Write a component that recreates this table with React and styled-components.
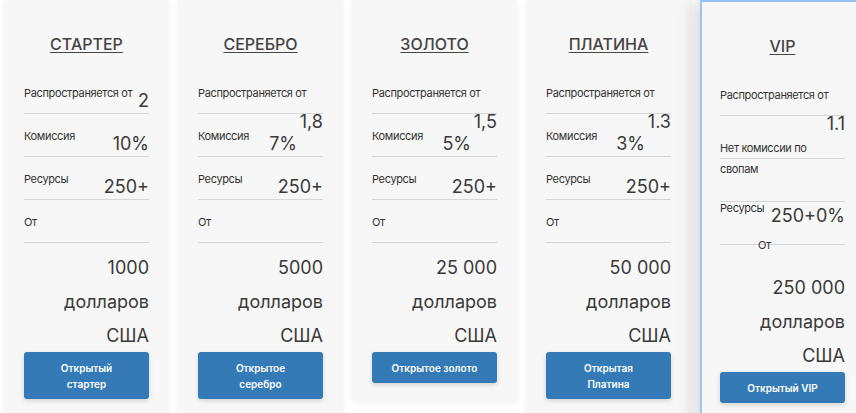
import React from "react";
import styled, { createGlobalStyle, css } from "styled-components";

const GlobalStyle = createGlobalStyle`
  html, body {
    margin: 0;
    padding: 0;
    background: #ffffff;
    overflow: hidden;
  }
  body {
    font-family: Inter, "Noto Sans", sans-serif;
    color: #333;
  }
`;

const plans = [
  {
    title: "СТАРТЕР",
    spread: "2",
    commission: "10%",
    resources: "250+",
    price: "1000",
    button: ["Открытый", "стартер"],
  },
  {
    title: "СЕРЕБРО",
    spread: "1,8",
    wrapSpread: true,
    commission: "7%",
    resources: "250+",
    price: "5000",
    button: ["Открытое", "серебро"],
  },
  {
    title: "ЗОЛОТО",
    spread: "1,5",
    wrapSpread: true,
    commission: "5%",
    resources: "250+",
    price: "25 000",
    button: ["Открытое золото"],
  },
  {
    title: "ПЛАТИНА",
    spread: "1.3",
    wrapSpread: true,
    commission: "3%",
    resources: "250+",
    price: "50 000",
    button: ["Открытая", "Платина"],
  },
];

function PriceLines({ amount, drop }) {
  return (
    <Price $drop={drop}>
      <div>{amount}</div>
      <div>долларов</div>
      <div>США</div>
    </Price>
  );
}

function PlanCard({ plan }) {
  return (
    <Card>
      <Title>{plan.title}</Title>
      <Row>
        <Label>Распространяется от</Label>
        <Value $below={plan.wrapSpread}>{plan.spread}</Value>
      </Row>
      <Row>
        <Label>Комиссия</Label>
        <Value $shift={plan.wrapSpread ? 26 : 0}>{plan.commission}</Value>
      </Row>
      <Row>
        <Label>Ресурсы</Label>
        <Value>{plan.resources}</Value>
      </Row>
      <Row>
        <Label>От</Label>
      </Row>
      <PriceLines amount={plan.price} />
      <OpenButton>
        {plan.button.map((line) => (
          <span key={line}>{line}</span>
        ))}
      </OpenButton>
    </Card>
  );
}

function VipCard() {
  return (
    <Card $featured>
      <Title>VIP</Title>
      <Row>
        <Label>Распространяется от</Label>
        <Value $below>1.1</Value>
      </Row>
      <Row>
        <Label $drop={10} $maxWidth={100} $wrap>
          Нет комиссии по свопам
        </Label>
      </Row>
      <Row $drop={27}>
        <Label>Ресурсы</Label>
        <Value>250+0%</Value>
      </Row>
      <Row $drop={21}>
        <Label $indent={38}>От</Label>
      </Row>
      <PriceLines amount="250 000" drop={18} />
      <OpenButton>
        <span>Открытый VIP</span>
      </OpenButton>
    </Card>
  );
}

export default function App() {
  return (
    <>
      <GlobalStyle />
      <Plans>
        {plans.map((plan) => (
          <PlanCard key={plan.title} plan={plan} />
        ))}
        <VipCard />
      </Plans>
    </>
  );
}

const Plans = styled.div`
  display: flex;
  align-items: flex-start;
  gap: 9px;
  padding-left: 4px;
  width: 856px;
  height: 413px;
  overflow: hidden;
  box-sizing: border-box;
`;

const Card = styled.div`
  flex: 0 0 165px;
  box-sizing: border-box;
  padding: 0 20px 19px;
  background: #f7f7f7;
  border-radius: 0 0 4px 4px;
  box-shadow: 0 1px 6px rgba(0, 0, 0, 0.06);
  display: flex;
  flex-direction: column;
  ${(p) =>
    p.$featured &&
    css`
      padding: 0 18px 19px;
      border: 2px solid #9cc2f3;
      box-shadow: -6px 0 18px rgba(0, 0, 0, 0.16);
    `}
`;

const Title = styled.h3`
  margin: 0;
  padding: 34px 0 17px;
  font-size: 16px;
  line-height: 20px;
  font-weight: 500;
  color: #444;
  text-align: center;
  text-decoration: underline;
  text-underline-offset: 2px;
`;

const Label = styled.span`
  font-size: 11px;
  line-height: 21px;
  letter-spacing: -0.35px;
  color: #333;
  white-space: ${(p) => (p.$wrap ? "normal" : "nowrap")};
  margin-top: ${(p) => p.$drop || 0}px;
  margin-left: ${(p) => p.$indent || 0}px;
  max-width: ${(p) => (p.$maxWidth ? `${p.$maxWidth}px` : "none")};
`;

const Value = styled.span`
  margin-left: auto;
  margin-top: 4px;
  margin-right: ${(p) => p.$shift || 0}px;
  font-size: 18px;
  line-height: 28px;
  color: #3a3a3a;
  white-space: nowrap;
  ${(p) =>
    p.$below &&
    css`
      flex-basis: 100%;
      text-align: right;
    `}
`;

const Row = styled.div`
  height: 43px;
  box-sizing: border-box;
  padding-top: ${(p) => 12 + (p.$drop || 0)}px;
  border-bottom: 1px solid #d6d6d6;
  display: flex;
  flex-wrap: wrap;
  align-content: flex-start;
  align-items: flex-start;
`;

const Price = styled.div`
  margin-top: ${(p) => 8 + (p.$drop || 0)}px;
  font-size: 18px;
  line-height: 34px;
  text-align: right;
  color: #3a3a3a;
`;

const OpenButton = styled.button`
  margin-top: -1px;
  padding: 7.5px 8px;
  border: none;
  border-radius: 3px;
  background: #337ab7;
  color: #fff;
  font-family: inherit;
  font-size: 10px;
  font-weight: 600;
  line-height: 16px;
  box-shadow: 0 2px 5px rgba(0, 0, 0, 0.14);
  display: flex;
  flex-direction: column;
  align-items: center;
  cursor: pointer;
`;
